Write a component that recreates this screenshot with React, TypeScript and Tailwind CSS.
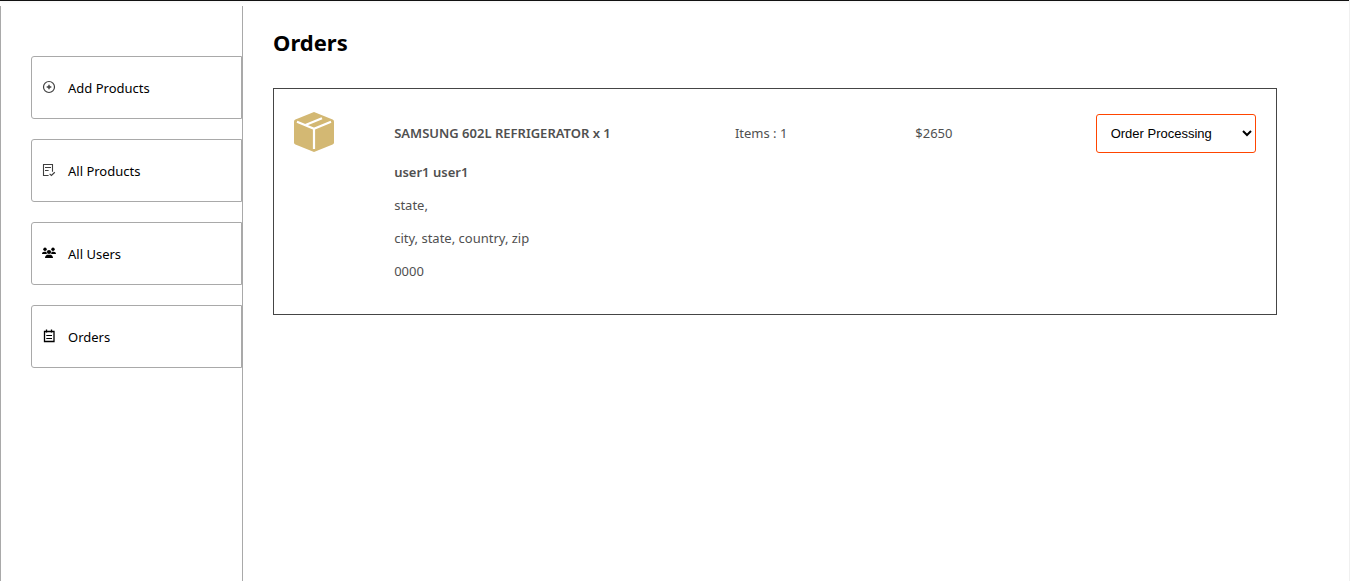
import type { ReactNode } from "react";

function AddIcon() {
  return (
    <svg viewBox="0 0 14 14" className="size-[14px]" fill="none" stroke="#3f3f3f" aria-hidden="true">
      <circle cx="7" cy="7" r="5.5" strokeWidth="1.2" />
      <path d="M7 4.7v4.6M4.7 7h4.6" strokeWidth="1.4" />
    </svg>
  );
}

function ListIcon() {
  return (
    <svg viewBox="0 0 14 14" className="size-[14px]" fill="none" stroke="#3f3f3f" aria-hidden="true">
      <path d="M6.6 12.5H1.5v-11h9v7.2" strokeWidth="1.1" />
      <path d="M3 4.5h6M3 7.5h3.6" strokeWidth="1.1" />
      <path d="M7.6 10.9l1.8 1.6 3.4-3.3" strokeWidth="1.2" />
    </svg>
  );
}

function UsersIcon() {
  return (
    <svg viewBox="0 0 14 14" className="size-[14px]" fill="#000" aria-hidden="true">
      <circle cx="3" cy="3.2" r="1.7" />
      <circle cx="11" cy="3.2" r="1.7" />
      <circle cx="7" cy="6" r="2.1" />
      <path d="M0 8c0-1.600 1-2.300 2.300-2.300h1.500c.3 0 .6.1.8.2C4.400 6.700 4.700 7.500 5.200 8z" />
      <path d="M14 8c0-1.600-1-2.300-2.300-2.300h-1.500c-.3 0-.6.1-.8.2.2.8-.1 1.600-.6 2.100z" />
      <path d="M3 12c0-2 1.200-3.300 2.800-3.300h2.400c1.600 0 2.800 1.300 2.800 3.300z" />
    </svg>
  );
}

function NoteIcon() {
  return (
    <svg viewBox="0 0 14 14" className="size-[14px]" fill="none" stroke="#000" aria-hidden="true">
      <path d="M2.500 2.500h9.500v10h-9.500z" strokeWidth="1.300" />
      <path d="M4.500 .5v3M9.500 .5v3" strokeWidth="1.300" />
      <path d="M4.300 6.500h5.700M4.300 9.500h5.700" strokeWidth="1.100" />
    </svg>
  );
}

function ParcelIcon() {
  return (
    <svg viewBox="0 0 40 40" className="size-10" aria-hidden="true">
      <path
        d="M20 0L38.600 7.400Q40 8 40 9.500V30.500Q40 32 38.600 32.600L20 40L1.400 32.600Q0 32 0 30.500V9.500Q0 8 1.400 7.400Z"
        fill="#d3b873"
      />
      <path
        d="M3 9.800L20 16.700L37 9.800M20 16.700V37M11.500 13.100L28 6.200"
        fill="none"
        stroke="#fff"
        strokeWidth="2.200"
      />
    </svg>
  );
}

function SidebarLink({ icon, label }: { icon: ReactNode; label: string }) {
  return (
    <a
      href="#"
      className="flex h-[63px] items-center gap-3 rounded-l-[3px] border border-[#a9a9a9] pl-2.5 text-[13px] text-black"
    >
      <span className="pb-px">{icon}</span>
      <span className="pt-[3px]">{label}</span>
    </a>
  );
}

export default function App() {
  return (
    <div className="flex min-h-screen flex-col border-r border-[#f0f0f0] bg-white font-['Noto_Sans','Open_Sans',sans-serif]">
      <header className="mb-[5px] h-px bg-[#111] shadow-sm" />
      <div className="flex grow">
        <nav
          aria-label="Admin"
          className="flex w-[243px] shrink-0 flex-col gap-5 border-x border-[#a9a9a9] pt-[50px] pl-[30px]"
        >
          <SidebarLink icon={<AddIcon />} label="Add Products" />
          <SidebarLink icon={<ListIcon />} label="All Products" />
          <SidebarLink icon={<UsersIcon />} label="All Users" />
          <SidebarLink icon={<NoteIcon />} label="Orders" />
        </nav>
        <main className="grow pt-5 pr-[72px] pl-[30px]">
          <h1 className="text-[22px] leading-8 font-bold text-black">Orders</h1>
          <article className="mt-[30px] grid grid-cols-[0.5fr_2fr_1fr_1fr_1fr] items-start gap-5 border border-[#454545] px-5 pt-[23px] pb-[34px] text-[13px] leading-[18px] text-[#505050]">
            <ParcelIcon />
            <div className="flex flex-col gap-[15px] pt-3">
              <p className="mb-1.5 font-semibold">SAMSUNG 602L REFRIGERATOR x 1</p>
              <p className="font-semibold">user1 user1</p>
              <p>state,</p>
              <p>city, state, country, zip</p>
              <p>0000</p>
            </div>
            <p className="pt-3">Items : 1</p>
            <p className="pt-3">$2650</p>
            <select
              aria-label="Order status"
              className="mt-0.5 h-[39px] w-full rounded-[3px] border border-[#ff4500] bg-white px-2.5 font-['Liberation_Sans',Arial,sans-serif] text-[13px] text-black"
            >
              <option>Order Processing</option>
              <option>Out for delivery</option>
              <option>Delivered</option>
            </select>
          </article>
        </main>
      </div>
    </div>
  );
}
